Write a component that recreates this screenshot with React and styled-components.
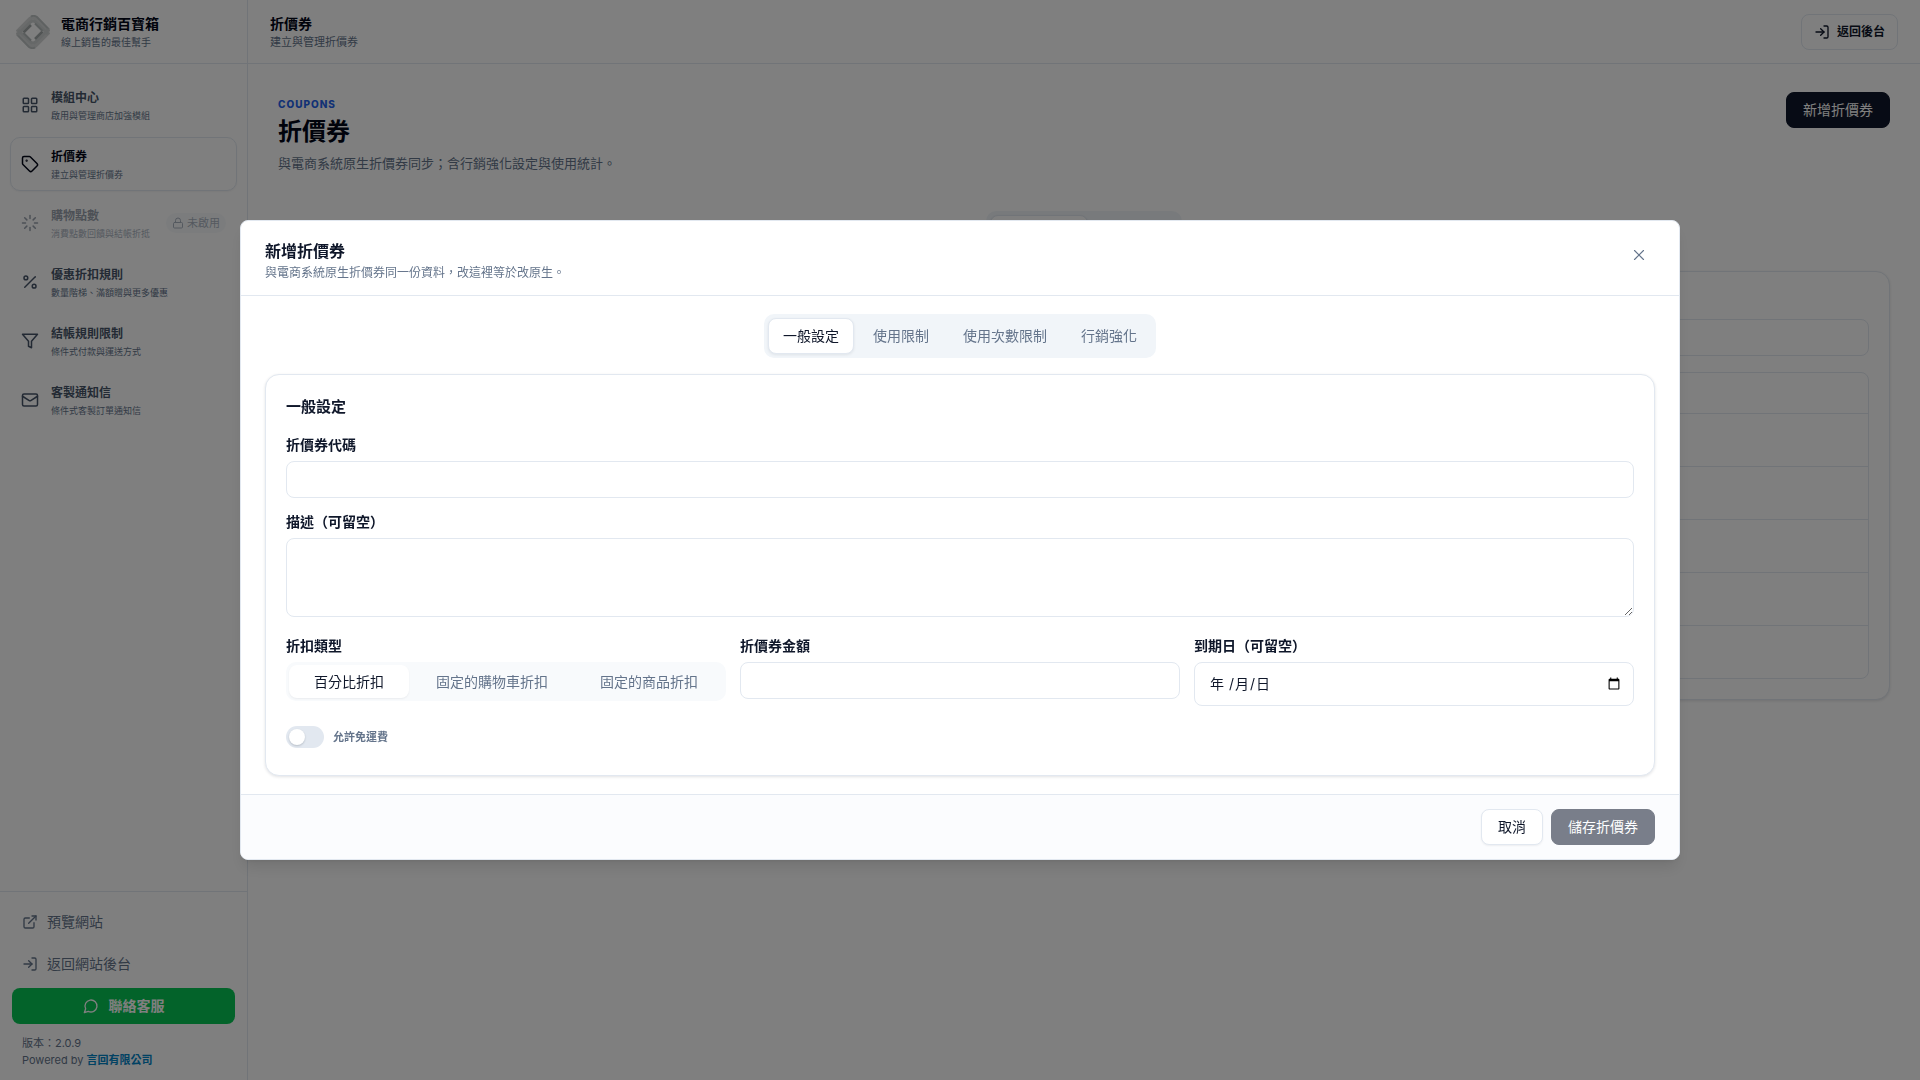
import React, { useState } from 'react';
import styled, { createGlobalStyle, css } from 'styled-components';
import { LayoutGrid, Tag, Loader, Percent, Mail, Lock, ExternalLink, X } from 'lucide-react';

const GlobalStyle = createGlobalStyle`
  *, *::before, *::after {
    box-sizing: border-box;
  }

  body {
    margin: 0;
    background: #fff;
    color: #0f172a;
    font-family: Inter, "Noto Sans CJK TC", sans-serif;
    font-size: 14px;
    line-height: 20px;
  }

  button, input, textarea {
    font: inherit;
    color: inherit;
  }

  h1, h2, p {
    margin: 0;
  }
`;

const Layout = styled.div`
  display: flex;
  min-height: 100vh;
`;

/* sidebar */

const Sidebar = styled.aside`
  display: flex;
  flex-direction: column;
  flex: 0 0 248px;
  border-right: 1px solid #e2e8f0;
`;

const Brand = styled.div`
  display: flex;
  align-items: center;
  gap: 11px;
  height: 64px;
  padding: 0 16px;
  border-bottom: 1px solid #e2e8f0;
`;

const BarTitle = styled.div`
  font-size: 14px;
  line-height: 20px;
  font-weight: 700;
  color: #020617;
`;

const BarSubtitle = styled.div`
  font-size: ${({ $small }) => ($small ? '10px' : '11px')};
  line-height: 16px;
  color: #64748b;
`;

const Nav = styled.nav`
  display: flex;
  flex-direction: column;
  flex: 1;
  gap: 5px;
  padding: 14px 10px;
`;

const NavItem = styled.a`
  display: flex;
  align-items: center;
  gap: 12px;
  height: 54px;
  padding: 0 10px;
  border: 1px solid transparent;
  border-radius: 10px;
  color: #475569;
  text-decoration: none;

  ${({ $active }) => $active && css`
    border-color: #e2e8f0;
    color: #020617;
    box-shadow: 0 1px 2px rgba(15, 23, 42, 0.05);
  `}

  ${({ $disabled }) => $disabled && css`
    opacity: 0.55;
  `}
`;

const NavText = styled.span`
  display: flex;
  flex-direction: column;
  flex: 1;
  padding-top: 4px;
`;

const NavLabel = styled.span`
  font-size: 12px;
  line-height: 18px;
  font-weight: ${({ $active }) => ($active ? 700 : 600)};
`;

const NavHint = styled.span`
  font-size: 9px;
  line-height: 18px;
  white-space: nowrap;
  color: #64748b;
`;

const Badge = styled.span`
  display: flex;
  align-items: center;
  gap: 3px;
  height: 20px;
  padding: 0 6px;
  border-radius: 10px;
  background: #f1f5f9;
  color: #64748b;
  font-size: 11px;
`;

const SidebarFooter = styled.div`
  display: flex;
  flex-direction: column;
  gap: 6px;
  padding: 12px 12px 11px;
  border-top: 1px solid #e2e8f0;
`;

const FooterLink = styled.a`
  display: flex;
  align-items: center;
  gap: 9px;
  height: 36px;
  padding: 0 10px;
  color: #64748b;
  text-decoration: none;
`;

const SupportButton = styled.button`
  display: flex;
  align-items: center;
  justify-content: center;
  gap: 10px;
  height: 36px;
  border: 0;
  border-radius: 8px;
  background: #06c755;
  color: #fff;
  font-weight: 600;
`;

const Version = styled.div`
  padding: 5px 10px 0;
  font-size: 11px;
  line-height: 17px;
  color: #64748b;

  a {
    color: #0284c7;
    font-weight: 700;
    text-decoration: none;
  }
`;

/* page */

const Page = styled.div`
  display: flex;
  flex-direction: column;
  flex: 1;
  min-width: 0;
`;

const TopBar = styled.header`
  display: flex;
  align-items: center;
  justify-content: space-between;
  height: 64px;
  padding: 0 22px;
  border-bottom: 1px solid #e2e8f0;
`;

const BackButton = styled.button`
  display: flex;
  align-items: center;
  gap: 7px;
  height: 36px;
  padding: 0 12px;
  border: 1px solid #e2e8f0;
  border-radius: 8px;
  background: #fff;
  font-size: 12px;
  font-weight: 600;
`;

const Content = styled.main`
  display: flex;
  flex-direction: column;
  padding: 28px 30px;
`;

const PageHead = styled.div`
  display: flex;
  align-items: flex-start;
  justify-content: space-between;
  min-height: 119px;
`;

const Eyebrow = styled.p`
  padding-top: 4px;
  font-size: 10px;
  line-height: 16px;
  font-weight: 800;
  letter-spacing: 1px;
  color: #2563eb;
`;

const PageTitle = styled.h1`
  font-size: 24px;
  line-height: 40px;
  font-weight: 600;
  color: #020617;
`;

const PageLead = styled.p`
  font-size: 13px;
  line-height: 22px;
  color: #64748b;
`;

const Button = styled.button`
  height: 36px;
  padding: 0 16px;
  border: 1px solid #0f172a;
  border-radius: 8px;
  background: #0f172a;
  color: #fff;
  white-space: nowrap;

  &:disabled {
    opacity: 0.55;
  }

  ${({ $outline }) => $outline && css`
    border-color: #e2e8f0;
    background: #fff;
    color: #0f172a;
    box-shadow: 0 1px 2px rgba(15, 23, 42, 0.06);
  `}
`;

const Tabs = styled.div`
  display: flex;
  align-self: center;
  gap: 4px;
  padding: 4px;
  border-radius: 10px;
  background: #f1f5f9;
`;

const Tab = styled.button`
  height: 36px;
  min-width: 86px;
  padding: 0 14px;
  border: 1px solid transparent;
  border-radius: 8px;
  background: transparent;
  color: #64748b;

  ${({ $active }) => $active && css`
    border-color: #e2e8f0;
    background: #fff;
    color: #0f172a;
    box-shadow: 0 1px 3px rgba(15, 23, 42, 0.08);
  `}

  ${({ $wide }) => $wide && css`
    min-width: 98px;
  `}
`;

const Card = styled.section`
  margin-top: 16px;
  padding: 20px;
  border: 1px solid #e2e8f0;
  border-radius: 14px;
  background: #fff;
  box-shadow: 0 1px 3px rgba(15, 23, 42, 0.12);
`;

const Search = styled.input`
  display: block;
  width: 100%;
  height: 37px;
  margin-top: 27px;
  padding: 0 16px;
  border: 1px solid #e2e8f0;
  border-radius: 8px;
`;

const TableBox = styled.div`
  margin-top: 16px;
  border: 1px solid #e2e8f0;
  border-radius: 8px;
`;

const TableRow = styled.div`
  height: ${({ $head }) => ($head ? '40px' : '53px')};

  & + & {
    border-top: 1px solid #e2e8f0;
  }
`;

/* dialog */

const Overlay = styled.div`
  position: fixed;
  inset: 0;
  display: flex;
  align-items: center;
  justify-content: center;
  background: rgba(0, 0, 0, 0.5);
`;

const Dialog = styled.div`
  width: 75vw;
  border: 1px solid #e2e8f0;
  border-radius: 8px;
  background: #fff;
  overflow: hidden;
  box-shadow: 0 10px 15px -3px rgba(0, 0, 0, 0.1), 0 4px 6px -4px rgba(0, 0, 0, 0.1);
`;

const DialogHead = styled.div`
  display: flex;
  align-items: flex-start;
  justify-content: space-between;
  padding: 16px 24px 14px;
  border-bottom: 1px solid #e2e8f0;
`;

const DialogTitle = styled.h2`
  font-size: 16px;
  line-height: 28px;
  font-weight: 600;
`;

const DialogHint = styled.p`
  font-size: 12px;
  line-height: 16px;
  color: #64748b;
`;

const CloseButton = styled.button`
  display: flex;
  align-items: center;
  height: 36px;
  padding: 0 7px;
  border: 0;
  background: none;
  color: #64748b;
`;

const DialogBody = styled.div`
  display: flex;
  flex-direction: column;
  padding: 18px 24px;

  ${Card} {
    display: flex;
    flex-direction: column;
    gap: 14px;
  }
`;

const DialogFooter = styled.div`
  display: flex;
  justify-content: flex-end;
  gap: 8px;
  padding: 14px 24px;
  border-top: 1px solid #e2e8f0;
  background: #fbfcfe;
`;

const SectionTitle = styled.h2`
  margin-bottom: 2px;
  font-size: 15px;
  line-height: 24px;
  font-weight: 600;
`;

const Field = styled.div`
  display: flex;
  flex-direction: column;
  gap: 6px;
  min-width: 0;
`;

const labelStyle = css`
  font-size: 14px;
  line-height: 20px;
  font-weight: 600;
  color: #0f172a;
`;

const Label = styled.label`
  ${labelStyle}
`;

const GroupLabel = styled.span`
  ${labelStyle}
`;

const fieldBox = css`
  width: 100%;
  border: 1px solid #e2e8f0;
  border-radius: 8px;
  background: #fff;
  outline: 0;
`;

const Input = styled.input`
  ${fieldBox}
  height: 37px;
  padding: 0 16px;
`;

const TextArea = styled.textarea`
  ${fieldBox}
  display: block;
  height: 79px;
  margin-bottom: 5px;
  padding: 8px 16px;
  resize: vertical;
`;

const DateBox = styled.div`
  position: relative;
`;

const DateInput = styled.input`
  ${fieldBox}
  display: block;
  height: 44px;
  padding: 0 10px 0 16px;

  &::-webkit-datetime-edit {
    opacity: 0;
  }
`;

/* sits over the empty date field */
const DatePlaceholder = styled.span`
  position: absolute;
  top: 12px;
  left: 16px;
  display: flex;
  gap: 1px;
  white-space: pre;
  pointer-events: none;
`;

const Columns = styled.div`
  display: grid;
  grid-template-columns: repeat(3, 1fr);
  align-items: start;
  gap: 14px;
`;

const Segments = styled.div`
  display: flex;
  gap: 2px;
  padding: 3px;
  border-radius: 10px;
  background: #f8fafc;
`;

const Segment = styled.button`
  flex: 1 1 auto;
  height: 33px;
  padding: 0;
  border: 0;
  border-radius: 8px;
  background: ${({ $active }) => ($active ? '#fff' : 'transparent')};
  color: ${({ $active }) => ($active ? '#0f172a' : '#64748b')};
  box-shadow: ${({ $active }) => ($active ? '0 1px 2px rgba(15, 23, 42, 0.06)' : 'none')};
`;

const SwitchRow = styled.label`
  display: flex;
  align-items: center;
  gap: 9px;
  height: 34px;
  margin-bottom: 1px;
  font-size: 11px;
  font-weight: 600;
  color: #64748b;
`;

const Switch = styled.input`
  appearance: none;
  width: 38px;
  height: 22px;
  margin: 0;
  padding: 3px;
  border-radius: 11px;
  background: ${({ checked }) => (checked ? '#0f172a' : '#e2e8f0')};

  &::before {
    content: "";
    display: block;
    width: 16px;
    height: 16px;
    margin-left: ${({ checked }) => (checked ? '16px' : '0')};
    border-radius: 50%;
    background: #fff;
    box-shadow: 0 1px 2px rgba(15, 23, 42, 0.2);
  }
`;

const Logo = () => (
  <svg width="34" height="34" viewBox="0 0 34 34" fill="none" aria-hidden="true">
    <path d="M1 17 14 4Q17 1 20 4L33 17" stroke="#d6d9d9" strokeWidth="4" />
    <path d="M33 17 20 30Q17 33 14 30L1 17" stroke="#d6d9d9" strokeWidth="4" />
    <path d="M15 1.500Q18 0 21 2L33 14.500" stroke="#bfc4c4" strokeWidth="2" />
    <path d="M19 32.500Q16 34 13 32L1 19.500" stroke="#bfc4c4" strokeWidth="2" />
    <path d="M1 20 14.500 7Q17 5 19.500 7L32 19" stroke="#ccd0d0" strokeWidth="3" />
    <path d="M33 14 19.500 27Q17 29 14.500 27L2 15" stroke="#ccd0d0" strokeWidth="3" />
    <path d="M7.500 17.500 15 10M26.500 16.500 19 24" stroke="#a3a9a9" strokeWidth="2.500" />
    <path d="M7.500 18 15 25.500M19 8.500 26.500 16" stroke="#b4baba" strokeWidth="2" />
  </svg>
);

const strokeProps = {
  viewBox: '0 0 24 24',
  fill: 'none',
  stroke: 'currentColor',
  strokeWidth: 2,
  strokeLinecap: 'round',
  strokeLinejoin: 'round',
};

const FilterIcon = ({ size }) => (
  <svg width={size} height={size} {...strokeProps}>
    <polygon points="22 3 2 3 10 12.46 10 19 14 21 14 12.46 22 3" />
  </svg>
);

const LogInIcon = ({ size }) => (
  <svg width={size} height={size} {...strokeProps}>
    <path d="M15 3h4a2 2 0 0 1 2 2v14a2 2 0 0 1-2 2h-4" />
    <polyline points="10 17 15 12 10 7" />
    <line x1="15" x2="3" y1="12" y2="12" />
  </svg>
);

const ChatIcon = ({ size }) => (
  <svg width={size} height={size} {...strokeProps}>
    <path d="M7.9 20A9 9 0 1 0 4 16.100L2 22Z" />
  </svg>
);

const navItems = [
  { icon: LayoutGrid, label: '模組中心', hint: '啟用與管理商店加強模組' },
  { icon: Tag, label: '折價券', hint: '建立與管理折價券', active: true },
  { icon: Loader, label: '購物點數', hint: '消費點數回饋與結帳折抵', disabled: true },
  { icon: Percent, label: '優惠折扣規則', hint: '數量階梯、滿額贈與更多優惠' },
  { icon: FilterIcon, label: '結帳規則限制', hint: '條件式付款與運送方式' },
  { icon: Mail, label: '客製通知信', hint: '條件式客製訂單通知信' },
];

const dialogTabs = ['一般設定', '使用限制', '使用次數限制', '行銷強化'];
const discountTypes = ['百分比折扣', '固定的購物車折扣', '固定的商品折扣'];
const emptyDate = ['年', ' /', '月', '/', '日'];

function CouponDialog() {
  const [tab, setTab] = useState(dialogTabs[0]);
  const [type, setType] = useState(discountTypes[0]);
  const [freeShipping, setFreeShipping] = useState(false);
  const [date, setDate] = useState('');

  return (
    <Overlay>
      <Dialog role="dialog" aria-modal="true" aria-labelledby="dialog-title">
        <DialogHead>
          <div>
            <DialogTitle id="dialog-title">新增折價券</DialogTitle>
            <DialogHint>與電商系統原生折價券同一份資料，改這裡等於改原生。</DialogHint>
          </div>
          <CloseButton aria-label="關閉"><X size={18} strokeWidth={1.5} /></CloseButton>
        </DialogHead>
        <DialogBody>
          <Tabs role="tablist">
            {dialogTabs.map((name) => (
              <Tab key={name} role="tab" aria-selected={tab === name} $active={tab === name} onClick={() => setTab(name)}>
                {name}
              </Tab>
            ))}
          </Tabs>
          <Card>
            <SectionTitle>一般設定</SectionTitle>
            <Field>
              <Label htmlFor="code">折價券代碼</Label>
              <Input id="code" type="text" />
            </Field>
            <Field>
              <Label htmlFor="description">描述（可留空）</Label>
              <TextArea id="description" />
            </Field>
            <Columns>
              <Field role="group" aria-labelledby="type-label">
                <GroupLabel id="type-label">折扣類型</GroupLabel>
                <Segments>
                  {discountTypes.map((name) => (
                    <Segment key={name} aria-pressed={type === name} $active={type === name} onClick={() => setType(name)}>
                      {name}
                    </Segment>
                  ))}
                </Segments>
              </Field>
              <Field>
                <Label htmlFor="amount">折價券金額</Label>
                <Input id="amount" type="text" inputMode="decimal" />
              </Field>
              <Field>
                <Label htmlFor="expires">到期日（可留空）</Label>
                <DateBox>
                  <DateInput id="expires" type="date" value={date} onChange={(e) => setDate(e.target.value)} />
                  <DatePlaceholder>
                    {date
                      ? date.replaceAll('-', '/')
                      : emptyDate.map((part, i) => <span key={i}>{part}</span>)}
                  </DatePlaceholder>
                </DateBox>
              </Field>
            </Columns>
            <SwitchRow>
              <Switch
                type="checkbox"
                role="switch"
                checked={freeShipping}
                onChange={(e) => setFreeShipping(e.target.checked)}
              />
              允許免運費
            </SwitchRow>
          </Card>
        </DialogBody>
        <DialogFooter>
          <Button $outline>取消</Button>
          <Button disabled>儲存折價券</Button>
        </DialogFooter>
      </Dialog>
    </Overlay>
  );
}

function App() {
  return (
    <>
      <GlobalStyle />
      <Layout>
        <Sidebar>
          <Brand>
            <Logo />
            <div>
              <BarTitle>電商行銷百寶箱</BarTitle>
              <BarSubtitle $small>線上銷售的最佳幫手</BarSubtitle>
            </div>
          </Brand>
          <Nav>
            {navItems.map(({ icon: Icon, label, hint, active, disabled }) => (
              <NavItem key={label} href="#" $active={active} $disabled={disabled}>
                <Icon size={18} />
                <NavText>
                  <NavLabel $active={active}>{label}</NavLabel>
                  <NavHint>{hint}</NavHint>
                </NavText>
                {disabled && <Badge><Lock size={12} />未啟用</Badge>}
              </NavItem>
            ))}
          </Nav>
          <SidebarFooter>
            <FooterLink href="#"><ExternalLink size={16} />預覽網站</FooterLink>
            <FooterLink href="#"><LogInIcon size={16} />返回網站後台</FooterLink>
            <SupportButton><ChatIcon size={16} />聯絡客服</SupportButton>
            <Version>
              版本：2.0.9<br />
              Powered by <a href="#">言回有限公司</a>
            </Version>
          </SidebarFooter>
        </Sidebar>
        <Page>
          <TopBar>
            <div>
              <BarTitle>折價券</BarTitle>
              <BarSubtitle>建立與管理折價券</BarSubtitle>
            </div>
            <BackButton><LogInIcon size={16} />返回後台</BackButton>
          </TopBar>
          <Content>
            <PageHead>
              <div>
                <Eyebrow>COUPONS</Eyebrow>
                <PageTitle>折價券</PageTitle>
                <PageLead>與電商系統原生折價券同步；含行銷強化設定與使用統計。</PageLead>
              </div>
              <Button>新增折價券</Button>
            </PageHead>
            <Tabs>
              <Tab $active $wide aria-label="折價券" />
              <Tab aria-label="統計" />
            </Tabs>
            <Card>
              <Search type="search" aria-label="搜尋" />
              <TableBox>
                <TableRow $head />
                <TableRow />
                <TableRow />
                <TableRow />
                <TableRow />
                <TableRow />
              </TableBox>
            </Card>
          </Content>
        </Page>
      </Layout>
      <CouponDialog />
    </>
  );
}

export default App;
